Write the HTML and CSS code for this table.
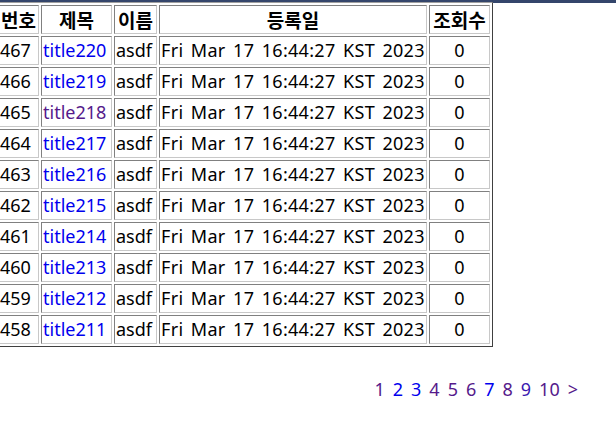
FILE: index.html
```html
<!DOCTYPE html>
<html lang="ko">
<head>
<meta charset="utf-8">
<title>게시판</title>
<link rel="stylesheet" href="styles.css">
</head>
<body>
<div class="topbar"></div>
<table class="board">
  <thead>
    <tr><th class="w-no">번호</th><th class="w-title">제목</th><th class="w-name">이름</th><th class="w-date">등록일</th><th class="w-hit">조회수</th></tr>
  </thead>
  <tbody>
    <tr><td>467</td><td><a href="#" class="link">title220</a></td><td>asdf</td><td class="date">Fri Mar 17 16:44:27 KST 2023</td><td class="c">0</td></tr>
    <tr><td>466</td><td><a href="#" class="link">title219</a></td><td>asdf</td><td class="date">Fri Mar 17 16:44:27 KST 2023</td><td class="c">0</td></tr>
    <tr><td>465</td><td><a href="#" class="visited">title218</a></td><td>asdf</td><td class="date">Fri Mar 17 16:44:27 KST 2023</td><td class="c">0</td></tr>
    <tr><td>464</td><td><a href="#" class="link">title217</a></td><td>asdf</td><td class="date">Fri Mar 17 16:44:27 KST 2023</td><td class="c">0</td></tr>
    <tr><td>463</td><td><a href="#" class="link">title216</a></td><td>asdf</td><td class="date">Fri Mar 17 16:44:27 KST 2023</td><td class="c">0</td></tr>
    <tr><td>462</td><td><a href="#" class="link">title215</a></td><td>asdf</td><td class="date">Fri Mar 17 16:44:27 KST 2023</td><td class="c">0</td></tr>
    <tr><td>461</td><td><a href="#" class="link">title214</a></td><td>asdf</td><td class="date">Fri Mar 17 16:44:27 KST 2023</td><td class="c">0</td></tr>
    <tr><td>460</td><td><a href="#" class="link">title213</a></td><td>asdf</td><td class="date">Fri Mar 17 16:44:27 KST 2023</td><td class="c">0</td></tr>
    <tr><td>459</td><td><a href="#" class="link">title212</a></td><td>asdf</td><td class="date">Fri Mar 17 16:44:27 KST 2023</td><td class="c">0</td></tr>
    <tr><td>458</td><td><a href="#" class="link">title211</a></td><td>asdf</td><td class="date">Fri Mar 17 16:44:27 KST 2023</td><td class="c">0</td></tr>
  </tbody>
</table>
<nav class="pager">
  <a href="#" class="pg visited">1</a>
  <a href="#" class="pg link">2</a>
  <a href="#" class="pg link">3</a>
  <a href="#" class="pg visited">4</a>
  <a href="#" class="pg visited">5</a>
  <a href="#" class="pg visited">6</a>
  <a href="#" class="pg link">7</a>
  <a href="#" class="pg visited">8</a>
  <a href="#" class="pg mixed">9</a>
  <a href="#" class="pg visited">10</a>
  <a href="#" class="pg visited">&gt;</a>
</nav>
</body>
</html>
```
FILE: styles.css
```css
html, body {
  margin: 0;
  padding: 0;
  background: #ffffff;
}
body {
  font-family: "Noto Sans", "Noto Sans CJK KR", sans-serif;
  font-size: 18px;
  color: #000000;
}
.topbar {
  height: 3px;
  background: #34456b;
}
.board {
  border: 1px solid;
  border-color: #a0a0a0 #404040 #404040 #a0a0a0;
  border-spacing: 2px;
  margin-left: -5px;
  margin-top: -1px;
}
.board th,
.board td {
  border: 1px solid;
  border-color: #808080 #c8c8c8 #c8c8c8 #808080;
  padding: 1px;
  height: 25px;
  line-height: 25px;
  white-space: nowrap;
}
.board th {
  font-family: "Noto Sans CJK KR", sans-serif;
  font-size: 19px;
  font-weight: bold;
  text-align: center;
}
.w-no { width: 37px; }
.w-title { width: 67px; }
.w-name { width: 39px; }
.w-date { width: 264px; }
.w-hit { width: 57px; }
.board td.date {
  word-spacing: 2.5px;
  letter-spacing: 0.3px;
}
.board td.c {
  text-align: center;
}
a {
  text-decoration: none;
}
.link {
  color: #0000ee;
}
.visited {
  color: #551a8b;
}
.mixed {
  color: #3a1ab0;
}
.pager {
  display: flex;
  justify-content: flex-end;
  gap: 8px;
  padding-right: 38px;
  margin-top: 30px;
  font-size: 18px;
  line-height: 24px;
}
```
